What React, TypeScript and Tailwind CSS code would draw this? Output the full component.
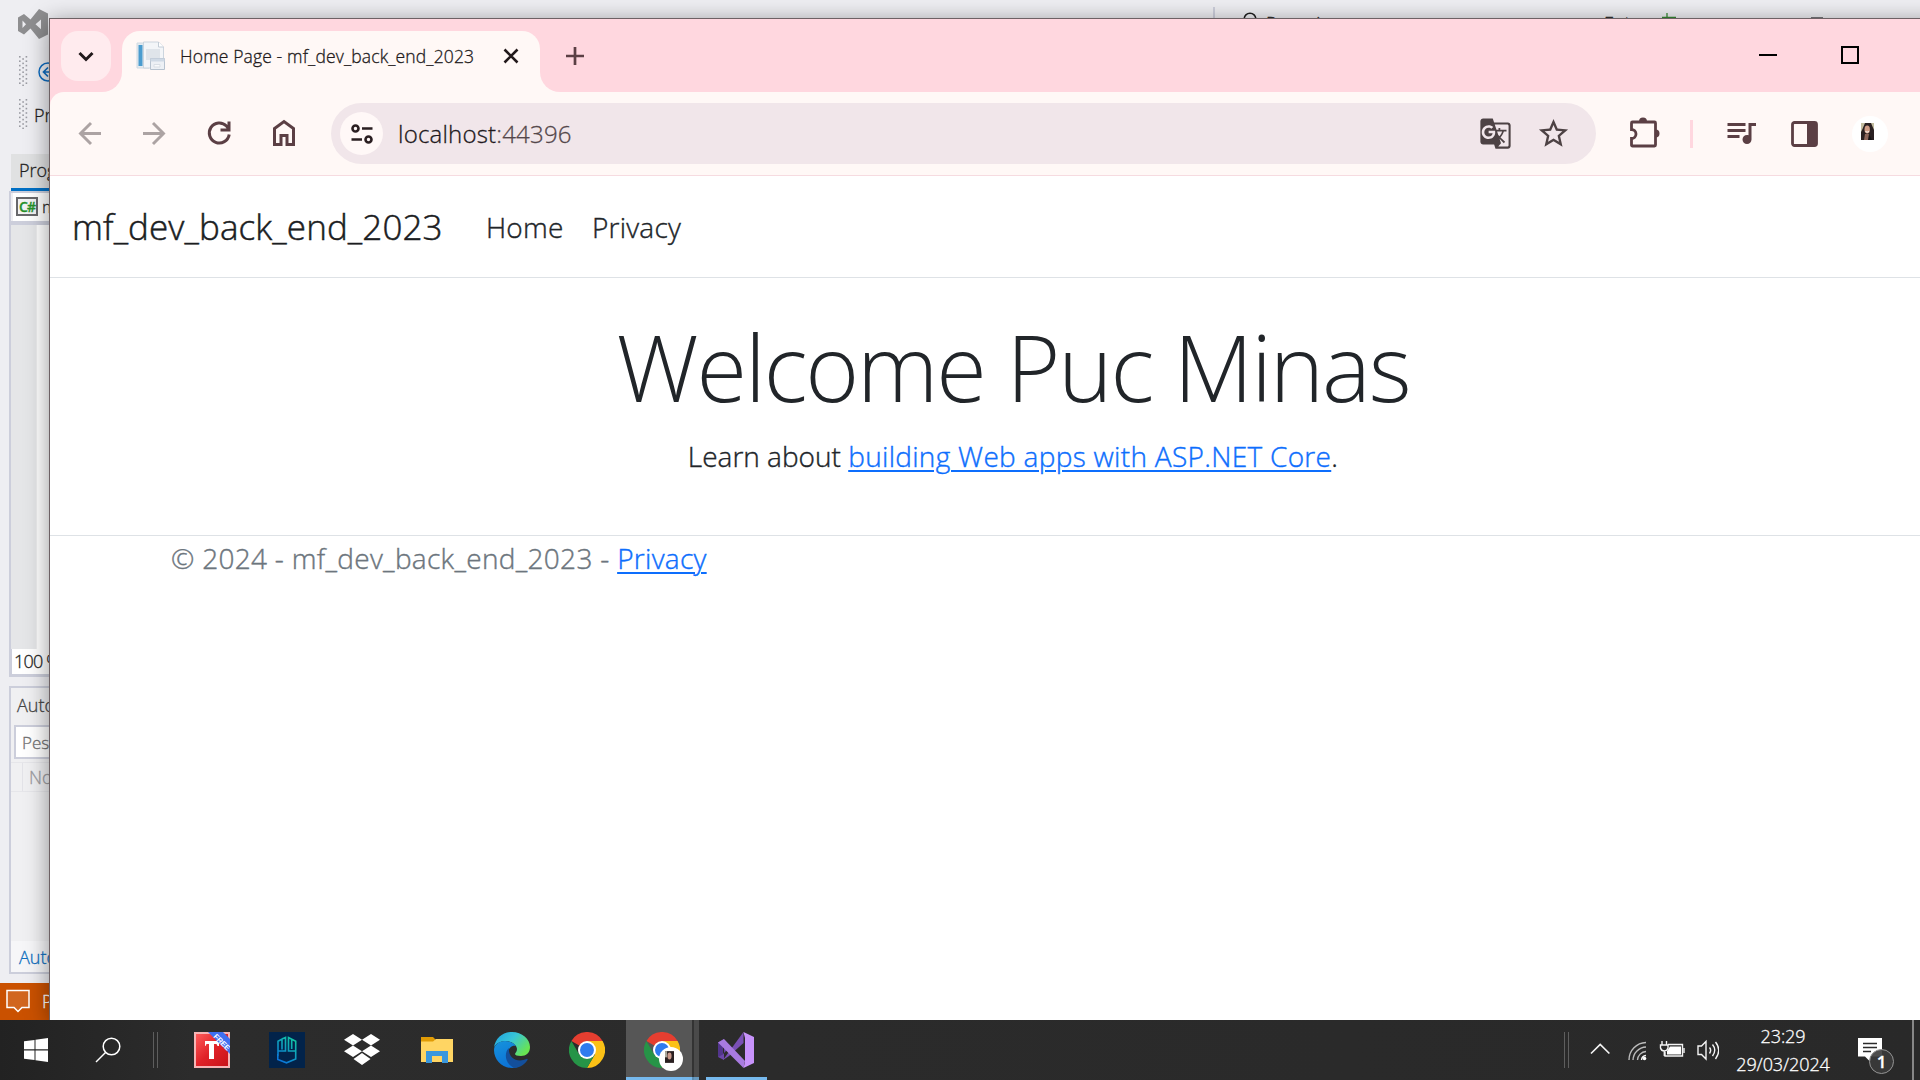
import type { ReactNode } from "react";
import { MdGTranslate, MdStarBorder, MdQueueMusic } from "react-icons/md";

function Grip() {
  const rows = [0, 1, 2, 3, 4, 5, 6];
  return (
    <svg width="9" height="30" viewBox="0 0 9 30" className="shrink-0">
      {rows.map((r) => (
        <g key={r} fill="#9b9ca3">
          <rect x="0" y={r * 4.4} width="1.6" height="1.6" />
          <rect x="6.6" y={r * 4.4} width="1.6" height="1.6" />
          <rect x="3.3" y={r * 4.4 + 2.2} width="1.6" height="1.6" />
        </g>
      ))}
    </svg>
  );
}

function TopStrip() {
  return (
    <div className="absolute top-0 left-[1212px] flex h-[18px] w-[708px] overflow-hidden text-[18px] leading-6 text-[#1e1e1e]">
      <div className="mt-[7px] ml-px h-3 w-0.5 shrink-0 bg-[#cccedb]" />
      <svg width="14" height="14" viewBox="0 0 14 14" className="mt-3 ml-[28px] shrink-0">
        <circle cx="7" cy="7" r="5.8" fill="none" stroke="#1e1e1e" strokeWidth="1.5" />
      </svg>
      <span className="mt-[11px] w-[337px] shrink-0 pl-[9px]">Pesquisar</span>
      <span className="mt-[11px] w-14 shrink-0 pl-2.5">Entrar</span>
      <svg width="18" height="18" viewBox="0 0 18 18" className="ml-3 shrink-0">
        <path d="M5 13v5M0 17.5h14" stroke="#388a34" strokeWidth="1.3" />
      </svg>
      <div className="mt-[17px] ml-[131px] h-px w-3 bg-[#77777c]" />
    </div>
  );
}

function StudioSide() {
  return (
    <div className="flex h-[1020px] w-[60px] flex-col overflow-hidden text-[18px] leading-6 whitespace-nowrap text-[#1e1e1e]">
      <div className="flex h-14 pt-[9px] pl-[18px]">
        <svg width="30" height="30" viewBox="0 0 30 30" className="shrink-0">
          <path
            fillRule="evenodd"
            fill="#8e8e90"
            d="M0 8.500 6 5l6.500 5.500L21 0l9 4.500v21L21 30l-8.500-10.500L6 25.500 0 22zM4.500 11.500v7.500l3.500-3.700zM23 10.500l-5.500 4.700 5.500 5z"
          />
        </svg>
      </div>
      <div className="flex h-[43px] pl-[19px]">
        <Grip />
        <svg width="20" height="20" viewBox="0 0 20 20" className="mt-[6px] ml-2.5 shrink-0">
          <circle cx="10" cy="10" r="9" fill="none" stroke="#0e6cc0" strokeWidth="1.5" />
          <path d="M15 10H6M10 5.500 5.500 10l4.500 4.500" fill="none" stroke="#0e6cc0" strokeWidth="1.700" />
        </svg>
      </div>
      <div className="flex h-[55px] pl-[19px]">
        <Grip />
        <span className="mt-[4px] pl-[6px]">Projeto</span>
      </div>
      <div className="ml-[11px] h-[34px] bg-[#e0e1e2] pt-[4px] pl-2">Program.cs</div>
      <div className="ml-[11px] h-[3px] bg-[#006fc4]" />
      <div className="ml-[9px] flex h-[34px] shrink-0 flex-col border-y-2 border-l-2 border-b-4 border-[#cccedb] pl-0.5">
        <div className="flex h-[28px] items-center bg-white pb-px pl-[3px]">
          <span className="flex h-[19px] w-[22px] shrink-0 items-center justify-center border-2 border-[#68686b] bg-[#f2f2f3] text-[14px] font-semibold tracking-[-1px] text-[#25912a]">C#</span>
          <span className="pl-[4px] text-[17px]">mf_dev</span>
        </div>
      </div>
      <div className="ml-[9px] flex h-[424px] shrink-0 border-l-2 border-[#cccedb]">
        <div className="w-[25px] shrink-0 bg-[#e5e6e8]" />
        <div className="grow border-l border-[#eeeef0] bg-white" />
      </div>
      <div className="ml-[9px] h-[28px] shrink-0 border-b-3 border-l-3 border-[#cccedb] bg-white pl-[2px] tracking-[-0.8px]">100 %</div>
      <div className="mt-[9px] ml-[9px] flex h-[288px] shrink-0 flex-col border-y-2 border-l-2 border-[#cccedb] bg-[#f0f0f2]">
        <div className="h-[37px] pt-[5px] pl-[6px] text-[#444]">Autos</div>
        <div className="ml-[3px] h-[34px] border-2 border-[#cccedb] bg-white pt-[4px] pl-[6px] text-[17px] text-[#717171]">Pesquisar</div>
        <div className="mt-[3px] flex h-[30px] border-y border-[#e6e6ea]">
          <div className="w-[12px] shrink-0 border-r border-[#e3e3e8]" />
          <div className="pt-[2px] pl-[6px] text-[#9b9b9f]">Nome</div>
        </div>
        <div className="mt-auto h-[31px] bg-[#f6f6f8] pt-[4px] pl-2 text-[#0e6fc0]">Autos</div>
      </div>
      <div className="mt-[9px] flex grow bg-[#ca5100] pt-[6px] pl-[6px] text-white">
        <svg width="24" height="25" viewBox="0 0 24 25" className="shrink-0">
          <path d="M1 1.500h22v17h-7l-4 4-4-4H1z" fill="#d1661f" stroke="#fff" strokeWidth="1.500" />
        </svg>
        <span className="pl-[12px]">Pronto</span>
      </div>
    </div>
  );
}

function Favicon() {
  return (
    <svg width="30" height="30" viewBox="0 0 30 30" className="shrink-0">
      <path d="M1 2h12v25H1z" fill="#e3eaf0" stroke="#d0dae2" />
      <path d="M2.500 4h4v21h-4z" fill="#4a9ccf" />
      <path d="M7.500 1h15l5 5v21h-20z" fill="#f3f5f8" stroke="#ccd5de" />
      <path d="M22.500 1v5h5" fill="#fff" stroke="#c3ccd6" />
      <path d="M10 8h14v11H10z" fill="#dfe4ea" />
      <path d="M14.500 17.500h14v11h-14z" fill="#edf0f5" stroke="#b7c2cf" />
      <path d="M14.500 17.500h14v3h-14z" fill="#cfd9e5" />
      <path d="M18 23.500h6v2.500h-6z" fill="#f9fafc" stroke="#d9dee5" />
    </svg>
  );
}

function TabStrip() {
  return (
    <div className="flex h-[73px] bg-[#ffd7df]">
      <div className="flex w-[72px] shrink-0 items-end bg-[#fff8f6]">
        <div className="flex h-[73px] w-[72px] rounded-br-[20px] bg-[#ffd7df] pt-3 pl-[11px]">
          <div className="flex h-[50px] w-[50px] items-center justify-center rounded-[17px] bg-[#ffebee]">
            <svg width="16" height="11" viewBox="0 0 16 11">
              <path d="M1.500 2 8 8.500 14.500 2" fill="none" stroke="#22191b" strokeWidth="3" />
            </svg>
          </div>
        </div>
      </div>
      <div className="mt-3 flex w-[418px] shrink-0 rounded-t-[18px] bg-[#fff8f6] pt-2.5 pl-[14px]">
        <Favicon />
        <span className="mt-[3px] ml-[14px] w-[309px] text-[17.5px] leading-6 tracking-[0.14px] whitespace-nowrap text-[#221a1b]">Home Page - mf_dev_back_end_2023</span>
        <svg width="16" height="16" viewBox="0 0 16 16" className="mt-[7px] ml-[14px] shrink-0">
          <path d="m1.500 1.500 13 13M14.500 1.500l-13 13" stroke="#22191b" strokeWidth="2.600" />
        </svg>
      </div>
      <div className="flex grow bg-[#fff8f6]">
        <div className="flex h-[73px] grow rounded-bl-[20px] bg-[#ffd7df]">
          <svg width="20" height="20" viewBox="0 0 20 20" className="mt-[27px] ml-[25px]">
            <path d="M10 1v18M1 10h18" stroke="#5b3f44" strokeWidth="2.700" />
          </svg>
          <div className="ml-auto flex w-[217px] pt-[27px]">
            <div className="mt-[8px] h-0.5 w-[18px] bg-black" />
            <div className="ml-16 h-[18px] w-[18px] border-2 border-black" />
          </div>
        </div>
      </div>
    </div>
  );
}

function Toolbar() {
  return (
    <div className="bg-[#ffd7df]">
      <div className="flex h-[84px] items-center rounded-tl-[14px] border-b border-[#f6dbe0] bg-[#fff8f6]">
        <svg width="281" height="40" viewBox="50 114 281 40" className="shrink-0" fill="none">
          <g stroke="#aca3a3" strokeWidth="2.900">
            <path d="M101 133.500H81M91 123 80.500 133.500 91 144" />
            <path d="M143 133.500h20M153 123l10.500 10.500L153 144" />
          </g>
          <g stroke="#5b3f44" strokeWidth="3">
            <path d="M229.200 134.500A10 10 0 1 1 226.500 126l2 2.500M229 121.500v8.500h-8.500" />
            <path d="M274.500 144.500v-16l9.500-7 9.500 7v16h-6.500v-9h-6v9z" />
          </g>
        </svg>
        <div className="flex h-[61px] w-[1265px] shrink-0 items-center rounded-full bg-[#f1e6ea] pl-[9px]">
          <div className="flex h-[43px] w-[43px] items-center justify-center rounded-full bg-[#fff8f7]">
            <svg width="22" height="20" viewBox="0 0 22 20" fill="none" stroke="#2a1e21" strokeWidth="2.600">
              <circle cx="4.500" cy="4.500" r="3" />
              <circle cx="17.500" cy="15.500" r="3" />
              <path d="M11 4.500h10.500M.5 15.500H11" />
            </svg>
          </div>
          <span className="ml-[15px] text-[24px] leading-8 tracking-[0.2px] text-[#22191c]">
            localhost<span className="text-[#54474a]">:44396</span>
          </span>
          <MdGTranslate className="mb-px ml-auto h-[33px] w-[33px] text-[#4d4244]" />
          <MdStarBorder className="mr-[25px] ml-[24px] h-[35px] w-[35px] text-[#4d4244]" />
        </div>
        <svg width="32" height="32" viewBox="0 0 32 32" className="mb-[4px] ml-[33px] shrink-0">
          <path
            d="M3.500 6h22q1 0 1 1v22q0 1-1 1h-22q-1 0-1-1v-6.500a4.500 4.500 0 0 0 0-9V7q0-1 1-1z"
            fill="none"
            stroke="#5b3f44"
            strokeWidth="2.800"
          />
          <path d="M10 5.500a4 4 0 0 1 8 0zM26.500 13.500a4 4 0 0 1 0 8z" fill="#5b3f44" />
        </svg>
        <div className="ml-[29px] h-7 w-[3px] shrink-0 bg-[#ffd7df]" />
        <MdQueueMusic className="mb-[4px] ml-[30px] h-9 w-9 shrink-0 text-[#5b3f44]" />
        <svg width="27" height="26" viewBox="0 0 27 26" className="ml-[32px] shrink-0">
          <rect x="1.500" y="1.500" width="24" height="23" rx="2" fill="#fff8f6" stroke="#5b3f44" strokeWidth="2.800" />
          <path d="M16 1h9v24h-9z" fill="#5b3f44" />
        </svg>
        <div className="ml-[34px] flex h-9 w-9 shrink-0 justify-center rounded-full bg-white pt-[7px] pr-[5px]">
          <Portrait />
        </div>
      </div>
    </div>
  );
}

function Portrait() {
  return (
    <svg width="13" height="17" viewBox="0 0 13 17">
      <path d="M0 0h13v17H0z" fill="#2a2021" />
      <path d="M0 0h4L1.500 6 0 9zM10 0h3v7z" fill="#c3bda0" />
      <ellipse cx="6.200" cy="6.500" rx="2.700" ry="4" fill="#cf9c85" />
      <path d="M4.500 8.500q1.700 1.400 3.300 0" stroke="#fff" fill="none" />
      <path d="M4 11h4l1 6H3z" fill="#8d665a" />
      <path d="M8 11l3 6H7z" fill="#161215" />
    </svg>
  );
}

function Page() {
  return (
    <div className="h-full bg-white text-[28px] leading-[44px] tracking-[0.22px] text-[#212529] [-webkit-text-stroke-width:0.4px]">
      <nav className="flex h-[102px] items-center border-b border-[#dee2e6] pl-[22px]">
        <a className="w-[414px] pt-px text-[35px] leading-[56px] tracking-[0.1px] text-[#1b1d1f] [-webkit-text-stroke-width:0.5px]">mf_dev_back_end_2023</a>
        <a className="w-[106px] text-[#212529]">Home</a>
        <a>Privacy</a>
      </nav>
      <main className="flex h-[257px] flex-col items-center pt-[34px]">
        <h1 className="text-[92px] leading-[110px] font-light tracking-[-2.1px] [-webkit-text-stroke-width:0px]">Welcome Puc Minas</h1>
        <p className="mt-[12px]">
          <span className="tracking-[0px]">Learn about </span>
          <a className="tracking-[0.3px] text-[#0d6efd] underline decoration-2 underline-offset-[3px]">building Web apps with ASP.NET Core</a>.
        </p>
      </main>
      <footer className="border-t border-[#dee2e6] pl-[121px] tracking-[0.3px] text-[#6c757d]">
        © 2024 - mf_dev_back_end_2023 - <a className="text-[#0d6efd] underline decoration-2 underline-offset-[3px]">Privacy</a>
      </footer>
    </div>
  );
}

function Chrome({ size = 36 }: { size?: number }) {
  return (
    <svg width={size} height={size} viewBox="0 0 48 48">
      <path d="M24 24 3.200 12A24 24 0 0 1 44.800 12z" fill="#e53e30" />
      <path d="M44.800 12A24 24 0 0 1 24 48l10.400-18L24 12z" fill="#fbc116" />
      <path d="M24 48A24 24 0 0 1 3.200 12l10.400 18 10.400 6 10.400-6z" fill="#269447" />
      <circle cx="24" cy="24" r="12" fill="#fff" />
      <circle cx="24" cy="24" r="9.300" fill="#2f7bee" />
    </svg>
  );
}

function Cell({ children }: { children: ReactNode }) {
  return <div className="flex h-full w-[75px] shrink-0 items-center justify-center">{children}</div>;
}

function Bars() {
  return <div className="h-9 w-[5px] shrink-0 border-x border-[#5e5e5e]" />;
}

function Taskbar() {
  return (
    <div className="relative flex h-[60px] items-center bg-linear-to-r from-[#222222] via-[#2c2c2c] via-10% to-[#292929] text-white">
      <div className="flex w-[72px] shrink-0 justify-center">
        <svg width="24" height="24" viewBox="0 0 24 24" fill="#fff">
          <path d="M0 3.300 10.500 1.900v9.400H0zM11.500 1.700 24 0v11.300H11.500zM0 12.400h10.500v9.700L0 20.700zM11.500 12.400H24V24l-12.500-1.700z" />
        </svg>
      </div>
      <div className="flex w-[72px] shrink-0 justify-center">
        <svg width="26" height="26" viewBox="0 0 26 26" fill="none" stroke="#fff" strokeWidth="1.500">
          <circle cx="16.500" cy="9.500" r="8.300" />
          <path d="M10.500 15.500 1 25" />
        </svg>
      </div>
      <div className="w-[30px] shrink-0 pl-[9px]"><Bars /></div>
      <Cell>
        <svg width="36" height="36" viewBox="0 0 36 36">
          <defs>
            <linearGradient id="red" x1="0" y1="0" x2="1" y2="1">
              <stop offset="0" stopColor="#ff5a5a" />
              <stop offset=".5" stopColor="#e02228" />
              <stop offset="1" stopColor="#c91319" />
            </linearGradient>
          </defs>
          <path d="M0 0h36v36H0z" fill="#f6b5b5" />
          <path d="M2 2h32v32H2z" fill="url(#red)" />
          <path d="M11 9h14v5h-1.500l-1-2H20v15h-5V12h-2.500l-1 2H11z" fill="#fff" />
          <path d="M14 0h15l7 7v15z" fill="#3f6ff0" />
          <text x="0" y="0" transform="translate(19 5) rotate(45)" fontSize="7.500" fontWeight="700" fill="#fff" fontFamily="Liberation Sans">FREE</text>
        </svg>
      </Cell>
      <Cell>
        <svg width="36" height="36" viewBox="0 0 36 36">
          <defs>
            <linearGradient id="teal" gradientUnits="userSpaceOnUse" x1="8" y1="30" x2="26" y2="8">
              <stop offset="0" stopColor="#0a6be0" />
              <stop offset="1" stopColor="#12c7a5" />
            </linearGradient>
          </defs>
          <path d="M0 0h36v36H0z" fill="#02234a" />
          <path
            d="M9 24V9.200L13 7v10.500M13 7l3.500-1.500v13.500H8.500M8.800 22v5.500l8.700 3.300 9.200-3.800V9.200L19.500 5.500v13.500h7M22.700 7.500v9.500"
            fill="none"
            stroke="url(#teal)"
            strokeWidth="1.600"
          />
        </svg>
      </Cell>
      <Cell>
        <svg width="36" height="32" viewBox="0 0 36 32" fill="#fff">
          <path d="m9 0 9 5.800-9 5.700L0 5.800zM27 0l9 5.800-9 5.700-9-5.700zM9 11.500l9 5.700-9 5.800-9-5.800zM27 11.500l9 5.700-9 5.800-9-5.800zM18 19l8.500 5.900L18 31l-8.500-6.100z" />
        </svg>
      </Cell>
      <Cell>
        <svg width="32" height="26" viewBox="0 0 32 26">
          <path d="M0 0h12l3 3-3 3H0z" fill="#e09b05" />
          <path d="M0 4.500h12L15 2h17v23H0z" fill="#ffd563" />
          <path d="M5 26V14h22v12h-6v-7H11v7z" fill="#3a97dd" />
        </svg>
      </Cell>
      <Cell>
        <svg width="36" height="36" viewBox="0 0 36 36">
          <defs>
            <linearGradient id="edgeTop" x1="0" y1="0" x2="1" y2=".6">
              <stop offset="0" stopColor="#1c9fe0" />
              <stop offset=".5" stopColor="#38c5d8" />
              <stop offset="1" stopColor="#68e452" />
            </linearGradient>
            <linearGradient id="edgeLeft" x1="0" y1="0" x2=".4" y2="1">
              <stop offset="0" stopColor="#1693dc" />
              <stop offset="1" stopColor="#0c72d6" />
            </linearGradient>
          </defs>
          <path d="M0 16C1 6 9 0 18 0c10 0 18 7 18 15 0 6-4 9-9 9-4 0-6-1-6-2 0-1 2-2 2-5 0-4-5-8-11-8C6 9 1 12 0 16z" fill="url(#edgeTop)" />
          <path d="M0 18c0-5 5-9 11-9 5 0 9 2 11 5-3-1-8 1-8 8 0 6 6 12 14 10-3 3-7 4-10 4C8 36 0 28 0 18z" fill="url(#edgeLeft)" />
          <path d="M15 16c-4 3-6 14 5 20 6 0 11-4 13.500-8 .500-1-.5-1.500-1-1C23 31 14 26 15 16z" fill="#134f9b" />
        </svg>
      </Cell>
      <Cell><Chrome /></Cell>
      <div className="relative flex h-full w-[74px] shrink-0">
        <div className="ml-0.5 flex h-full w-[66px] shrink-0 items-center border-b-3 border-[#76b9ed] bg-[#565656] pt-[3px] pl-[18px]"><Chrome /></div>
        <div className="h-full w-0.5 shrink-0 border-b-3 border-[#5a8bb0] bg-[#333]" />
        <div className="h-full w-[5px] shrink-0 border-b-3 border-[#6798bd] bg-[#4a4a4a]" />
        <div className="absolute top-[27px] left-[35px] flex h-6 w-6 items-center justify-center rounded-full bg-white pr-1 pb-1">
          <svg width="9" height="12" viewBox="0 0 13 17"><path d="M0 0h13v17H0z" fill="#2a2021" /><path d="M0 0h3v9H0z" fill="#aaa79a" /><ellipse cx="6.500" cy="7" rx="3" ry="5" fill="#c8988a" /></svg>
        </div>
      </div>
      <div className="ml-[8px] flex h-full w-[61px] shrink-0 items-center border-b-3 border-[#76b9ed] pt-[3px] pl-[12px]">
        <svg width="36" height="36" viewBox="0 0 36 36">
          <path fillRule="evenodd" d="M0 25V10.500L6 7v21zM5 13v9l4.500-4.500z" fill="#6b46a8" />
          <path d="M0 25V10.500l5 3v9z" fill="#52358c" />
          <path d="M5 28 25.500 0v11L11 24z" fill="#7a50b5" />
          <path d="M0 10.500 6 7l21 22-1.500 7z" fill="#a87be0" />
          <path d="M25.500 0 36 5v26l-10.500 5 1.500-6V6z" fill="#c893fb" />
        </svg>
      </div>
      <div className="ml-auto flex h-full shrink-0 items-center">
        <Bars />
        <svg width="150" height="40" viewBox="1569 1030 150 40" fill="none" stroke="#f4f4f4" strokeWidth="1.400">
          <path d="m1591 1053.500 9.200-9 9.200 9" strokeWidth="1.700" />
          <path d="M1629 1060a17.500 17.500 0 0 1 17-17.500M1633 1060a13.500 13.500 0 0 1 13-13M1637.500 1060a9 9 0 0 1 8.500-8.500" stroke="#bcbcbc" />
          <path d="M1641.500 1060a5 5 0 0 1 4.500-4.500" />
          <circle cx="1644.500" cy="1058.500" r="1.800" fill="#fff" stroke="none" />
          <path d="M1668 1044.500h14.500v11.500H1665v-4" />
          <path d="M1670 1046.500h11v8h-14v-3.500z" fill="#fff" stroke="none" />
          <path d="M1684 1048v5M1662 1041v4M1666.500 1041v4M1660.500 1045h7.500v3q-1 3-3.700 3-3 0-3.800-3zM1664.300 1051v5" />
          <path d="M1698 1046h3.500l4.500-4.500v17.500l-4.500-4.500h-3.500z" />
          <path d="M1709.500 1047.500q2.300 2.700 0 6M1712.500 1044.500q4.500 5.500 0 11.500M1715.500 1042q6.500 8 0 17" />
        </svg>
        <div className="flex h-full w-[128px] flex-col items-center pt-[2px] text-[18px] leading-7 tracking-[-0.1px]">
          <span>23:29</span>
          <span>29/03/2024</span>
        </div>
        <div className="relative flex h-full w-[65px]">
          <svg width="26" height="28" viewBox="0 0 26 28" className="mt-[18px] ml-[11px]">
            <path d="M0 0h24v18.500H12.500V24L7 18.500H0z" fill="#fff" />
            <path d="M5 5.500h14M5 9.500h14M5 13.500h8" stroke="#2b2b2b" strokeWidth="1.300" />
          </svg>
          <div className="absolute top-[29px] left-[22px] flex h-[25px] w-[25px] items-center justify-center rounded-full border border-[#949494] bg-[#3a3a3a]/90 text-[17px] leading-none font-semibold">1</div>
        </div>
        <div className="mr-[6px] h-full w-0.5 bg-[#868686]" />
      </div>
    </div>
  );
}

export default function App() {
  return (
    <div className="relative flex h-[1080px] w-[1920px] flex-col overflow-hidden bg-[#eeeef2] font-['Open_Sans',sans-serif] font-light [-webkit-text-stroke-width:0.3px]">
      <div className="relative h-[1020px] w-full overflow-hidden">
        <StudioSide />
        <TopStrip />
        <div className="absolute top-[18px] left-[49px] h-[1002px] w-[1927px] border-t border-l border-[#6d6164] shadow-[0_4px_22px_rgba(0,0,0,0.42)]">
          <div className="flex h-full flex-col overflow-hidden">
            <TabStrip />
            <Toolbar />
            <Page />
          </div>
        </div>
      </div>
      <Taskbar />
    </div>
  );
}
